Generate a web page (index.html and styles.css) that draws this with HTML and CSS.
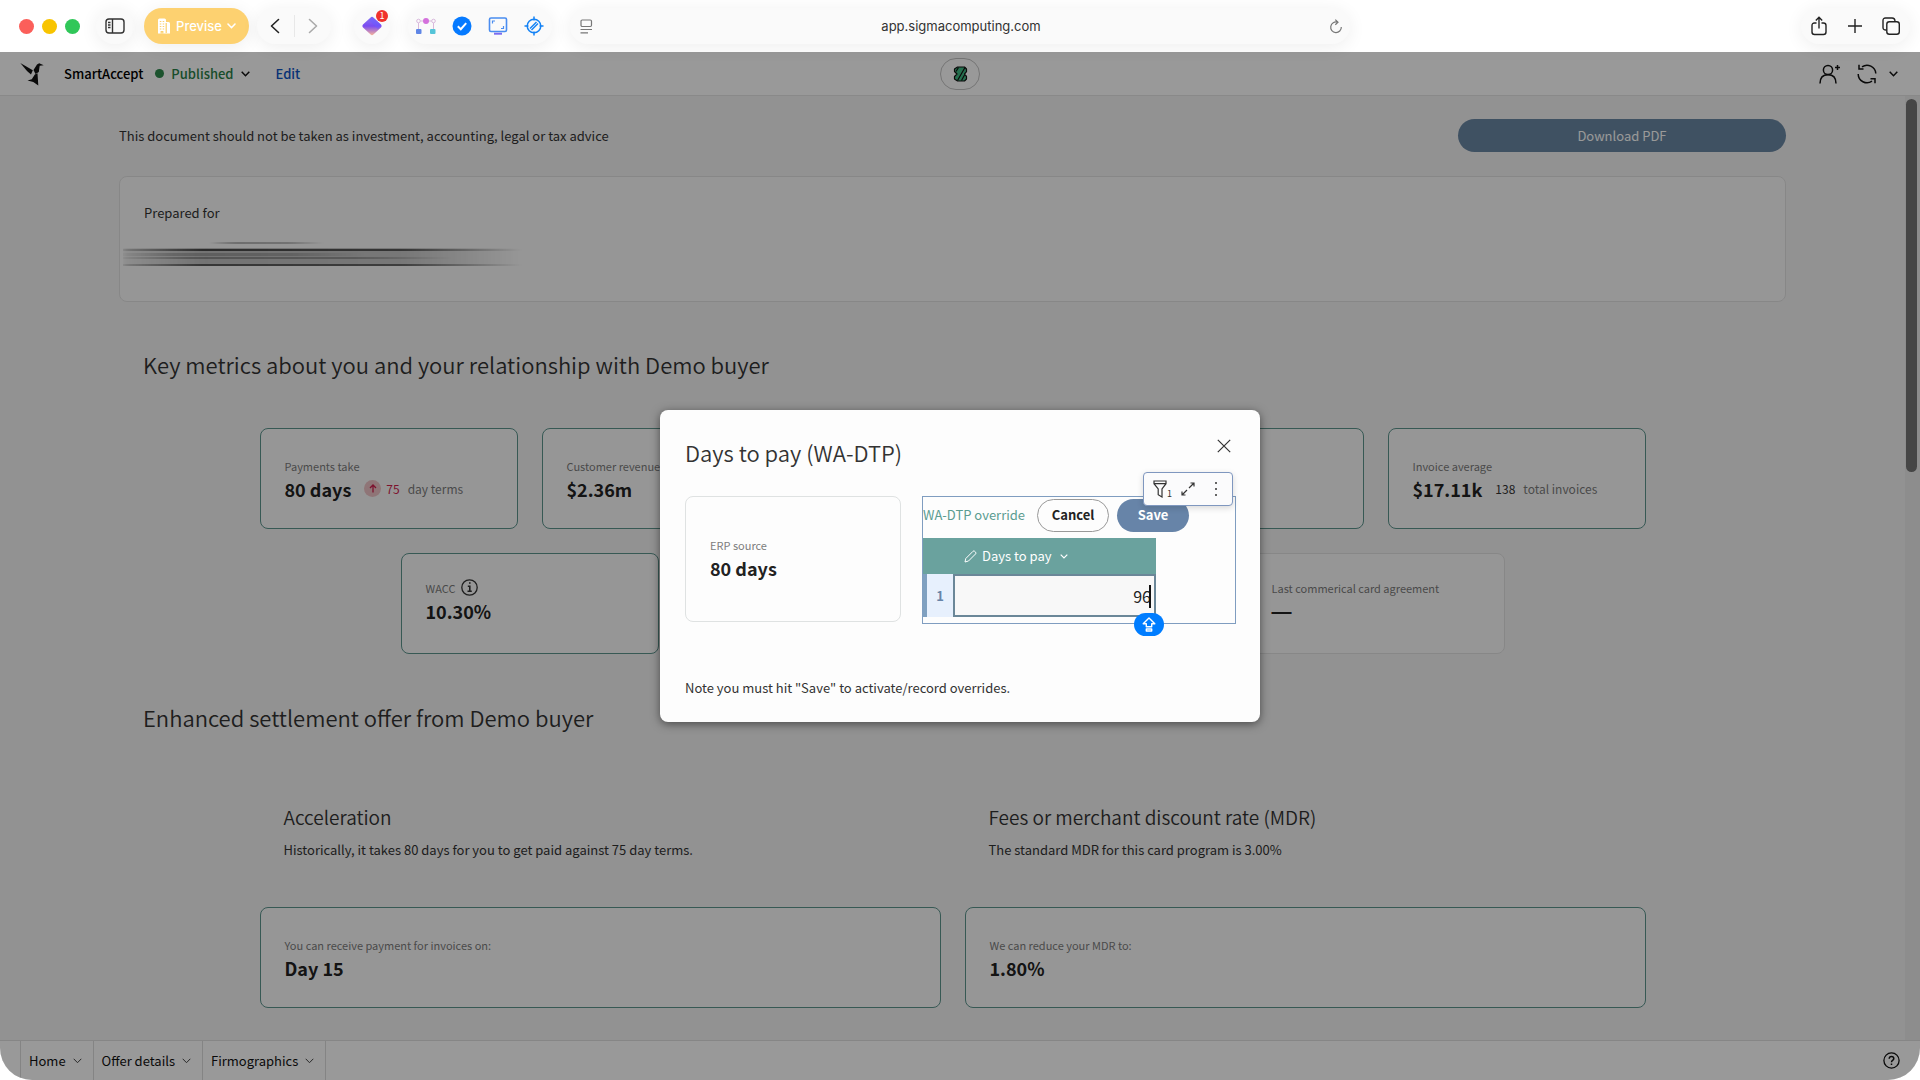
FILE: index.html
```html
<!DOCTYPE html>
<html lang="en">
<head>
<meta charset="utf-8">
<title>SmartAccept</title>
<link rel="stylesheet" href="styles.css">
</head>
<body>

<!-- browser toolbar -->
<header class="browser">
  <div class="lights"><span class="light red"></span><span class="light yellow"></span><span class="light green"></span></div>
  <button class="pill sidebar" aria-label="Sidebar">
    <svg width="20" height="16" viewBox="0 0 20 16" fill="none" stroke="#333" stroke-width="1.4"><rect x="1" y="1" width="18" height="14" rx="3"/><path d="M7.5 1v14M3 4.5h2.5M3 7h2.5M3 9.500h2.500"/></svg>
  </button>
  <button class="pill profile">
    <svg width="14" height="16" viewBox="0 0 14 16"><path fill="#fff" d="M1 2q0-1.500 1.500-1.500h5Q9 .5 9 2v2h2.500Q13 4 13 5.500v10H1z"/><path stroke="#fbd06d" stroke-width="1.200" fill="none" d="M2.800 3.500h1.500M5.700 3.500h1.500M2.800 6h1.500M5.700 6h1.500M2.800 8.500h1.500M5.700 8.500h1.500M2.800 11h1.500M5.700 11h1.500M4.200 15.500v-2h1.600v2M9.200 5v10"/></svg>
    <span>Previse</span>
    <svg width="9" height="6" viewBox="0 0 9 6" fill="none" stroke="#fff" stroke-width="1.600" stroke-linecap="round"><path d="M1 1l3.500 3.700L8 1"/></svg>
  </button>
  <div class="pill nav">
    <button aria-label="Back"><svg width="10" height="16" viewBox="0 0 10 16" fill="none" stroke="#222" stroke-width="1.600" stroke-linecap="round" stroke-linejoin="round"><path d="M8.500 1.500L1.500 8l7 6.500"/></svg></button>
    <button aria-label="Forward"><svg width="10" height="16" viewBox="0 0 10 16" fill="none" stroke="#aaa" stroke-width="1.600" stroke-linecap="round" stroke-linejoin="round"><path d="M1.500 1.500l7 6.500-7 6.500"/></svg></button>
  </div>
  <button class="pill ext" aria-label="Extension">
    <svg width="20" height="20" viewBox="0 0 20 20"><defs><linearGradient id="dia" x1="0" y1="0" x2="0" y2="1"><stop offset="0" stop-color="#8a78f0"/><stop offset=".5" stop-color="#7a4bf2"/><stop offset="1" stop-color="#f6b39a"/></linearGradient></defs><path fill="url(#dia)" d="M8.600 1.500q1.400-1.300 2.800 0l7.600 7q1.200 1.500 0 3l-7.600 7q-1.400 1.300-2.800 0l-7.600-7q-1.200-1.500 0-3z"/><path fill="#6a5bff" opacity=".6" d="M10 .8l9 8.200-3 4L7 4z"/></svg>
    <span class="badge">1</span>
  </button>
  <div class="pill exts">
    <button aria-label="Flow"><svg width="20" height="18" viewBox="0 0 20 18"><g fill="none" stroke="#d9b8dc"><circle cx="2.500" cy="4" r="1.800"/><circle cx="17.500" cy="4" r="1.800"/><path d="M4.500 4h3M12.500 4h3M2.500 6v6M17.500 6v6"/></g><circle cx="10" cy="4" r="3" fill="#d471dc"/><rect x="0" y="12" width="5.500" height="5" rx="1" fill="#5f86e6"/><rect x="14" y="12" width="5.500" height="5" rx="1" fill="#55c4d8"/></svg></button>
    <button aria-label="Tasks"><svg width="20" height="20" viewBox="0 0 20 20"><circle cx="10" cy="10" r="9.500" fill="#067aff"/><path d="M5.800 10.300l3 2.900 5.400-6" fill="none" stroke="#fff" stroke-width="2"/></svg></button>
    <button aria-label="Screen"><svg width="20" height="18" viewBox="0 0 20 18" fill="none" stroke="#4a8df0" stroke-width="1.600"><rect x="1.500" y="1" width="17" height="13.500" rx="1.500"/><path d="M4.500 6.500V4H7M15.500 9v2.500H13" stroke-width="1.200"/><path d="M6 16.700h8" stroke="#7a6cf0" stroke-width="2"/></svg></button>
    <button aria-label="Target"><svg width="20" height="20" viewBox="0 0 20 20" fill="none" stroke="#1583f5" stroke-width="1.500"><circle cx="10" cy="10" r="6.800"/><path d="M10 .5v4M10 15.500v4M.5 10h4M15.500 10h4M6 12.500L12.500 6M7.500 14L14 7.500"/></svg></button>
  </div>
  <div class="pill address">
    <svg width="13" height="15" viewBox="0 0 13 15" fill="none" stroke="#777" stroke-width="1.200"><rect x="1" y="1" width="10.500" height="6.500" rx="1.200"/><path d="M.5 10.500H12M.5 13.800h7.500"/></svg>
    <input type="text" value="app.sigmacomputing.com" aria-label="Address">
    <svg width="14" height="15" viewBox="0 0 14 15" fill="none" stroke="#777" stroke-width="1.200"><path d="M8.500 3.200A5.300 5.300 0 1 0 12.300 8M6.300.6l2.700 2.700-2.700 2.500"/></svg>
  </div>
  <div class="pill actions">
    <button aria-label="Share"><svg width="16" height="20" viewBox="0 0 16 20" fill="none" stroke="#222" stroke-width="1.400"><path d="M5.500 7H3.500Q1 7 1 9.500V16q0 2.500 2.500 2.500h9Q15 18.500 15 16V9.500Q15 7 12.500 7h-2M8 12.500V1.500M4.800 4.500L8 1.300l3.200 3.200"/></svg></button>
    <button aria-label="New tab"><svg width="14" height="14" viewBox="0 0 14 14" stroke="#222" stroke-width="1.400"><path d="M7 0v14M0 7h14"/></svg></button>
    <button aria-label="Tabs"><svg width="18" height="18" viewBox="0 0 18 18" fill="none" stroke="#222" stroke-width="1.400"><rect x="4.800" y="4.800" width="12.500" height="12.500" rx="2.500"/><path d="M4.500 13Q1 13.300 1 10.500V3.500Q1 1 3.500 1H10q3 0 3 3.500"/></svg></button>
  </div>
</header>

<div class="app">
  <nav class="topbar">
    <svg class="logo" width="24" height="24" viewBox="0 0 24 24" fill="#111"><path d="M.3 1L12.800 8.300 11 12.500 7 9z"/><path d="M13.500 8L17 2.500l2.200-1.200 4.500 2-4 .4-.9 6.300-3.300 2z"/><path d="M14.800 12.500l2.700-1.200L18.300 23.500l-5-3.600-5.800-1.400 4.300-1.200z"/></svg>
    <strong class="doc-name">SmartAccept</strong>
    <button class="status"><span class="dot"></span>Published
      <svg width="9" height="6" viewBox="0 0 9 6" fill="none" stroke="#111" stroke-width="1.500"><path d="M.7.800l3.800 3.900L8.300.8"/></svg>
    </button>
    <a class="edit" href="#">Edit</a>
    <button class="org" aria-label="Organization">
      <svg width="15" height="16" viewBox="0 0 15 16" fill="#3fb983" stroke="#111" stroke-width="1.200" stroke-linejoin="round"><path d="M4.500 1h7l2 2v2.700L11.500 8l2 2.300V13l-2 2h-7l-3-2v-2.500L4 8 1.500 5.500V3z"/><path fill="none" d="M4.500 14.500L12 1.500M8.500 14.500l3-5.500M3 5.500L5.500 1.500"/></svg>
    </button>
    <div class="tools">
      <button aria-label="Share"><svg width="22" height="20" viewBox="0 0 22 20" fill="none" stroke="#111" stroke-width="1.500"><circle cx="9" cy="6" r="4.600"/><path d="M1 19.500q0-8.700 8-8.700t8 8.700M18.500 1v5M16 3.500h5"/></svg></button>
      <button aria-label="Refresh"><svg width="20" height="20" viewBox="0 0 20 20" fill="none" stroke="#111" stroke-width="1.500"><path d="M5 2.800A8.800 8.800 0 0 1 18.800 9.500M15 17.200A8.800 8.800 0 0 1 1.200 10M2 .8v4.200h4.500M18 19.200v-4.500h-4.500"/></svg></button>
      <button aria-label="More"><svg width="9" height="6" viewBox="0 0 9 6" fill="none" stroke="#111" stroke-width="1.500"><path d="M.7.800l3.800 3.900L8.300.8"/></svg></button>
    </div>
  </nav>

  <div class="scroll">
    <main class="page">
      <div class="intro">
        <p>This document should not be taken as investment, accounting, legal or tax advice</p>
        <button class="download">Download PDF</button>
      </div>

      <section class="prepared">
        <p>Prepared for</p>
        <svg class="smear" width="400" height="28" viewBox="0 0 400 28">
          <defs>
            <linearGradient id="fade"><stop offset="0" stop-color="#000" stop-opacity=".2"/><stop offset=".2" stop-color="#000" stop-opacity=".9"/><stop offset=".7" stop-color="#000" stop-opacity=".8"/><stop offset="1" stop-color="#000" stop-opacity="0"/></linearGradient>
            <filter id="soft"><feGaussianBlur stdDeviation="3 .6"/></filter>
          </defs>
          <g fill="url(#fade)" filter="url(#soft)">
            <rect x="90" y="1" width="110" height="2" opacity=".3"/>
            <rect y="7" width="398" height="18" opacity=".26"/>
            <rect y="8" width="398" height="2" opacity=".7"/>
            <rect y="12" width="240" height="3" opacity=".2"/>
            <rect y="16" width="330" height="2" opacity=".3"/>
            <rect y="23" width="398" height="2" opacity=".6"/>
          </g>
        </svg>
      </section>

      <h2>Key metrics about you and your relationship with Demo buyer</h2>
      <div class="metrics">
        <div class="card">
          <span class="label">Payments take</span>
          <div class="figure"><b>80 days</b><span class="compare up"><i class="arrow"><svg width="8" height="9" viewBox="0 0 8 9" fill="none" stroke="#d01f4e" stroke-width="1.300"><path d="M4 8.500V1.200M1 4l3-3 3 3"/></svg></i>75</span><span class="unit">day terms</span></div>
        </div>
        <div class="card"><span class="label">Customer revenue</span><div class="figure"><b>$2.36m</b></div></div>
        <div class="card"></div>
        <div class="card"></div>
        <div class="card">
          <span class="label">Invoice average</span>
          <div class="figure"><b>$17.11k</b><span class="compare">138</span><span class="unit">total invoices</span></div>
        </div>
      </div>
      <div class="metrics second">
        <div class="card">
          <span class="label">WACC <svg width="17" height="17" viewBox="0 0 17 17" fill="none" stroke="#333" stroke-width="1.300"><circle cx="8.500" cy="8.500" r="7.700"/><path stroke-width="1.600" d="M6.800 7.300h2v5M6.500 12.300h4.300M8 4h1.600"/></svg></span>
          <div class="figure"><b>10.30%</b></div>
        </div>
        <div class="card"></div>
        <div class="card"></div>
        <div class="card plain"><span class="label">Last commerical card agreement</span><div class="figure"><b class="none">—</b></div></div>
      </div>

      <h2>Enhanced settlement offer from Demo buyer</h2>
      <div class="offers">
        <section>
          <h3>Acceleration</h3>
          <p>Historically, it takes 80 days for you to get paid against 75 day terms.</p>
          <div class="card"><span class="label">You can receive payment for invoices on:</span><div class="figure"><b>Day 15</b></div></div>
        </section>
        <section>
          <h3>Fees or merchant discount rate (MDR)</h3>
          <p>The standard MDR for this card program is 3.00%</p>
          <div class="card"><span class="label">We can reduce your MDR to:</span><div class="figure"><b>1.80%</b></div></div>
        </section>
      </div>
    </main>
    <div class="track"><div class="thumb"></div></div>
  </div>

  <footer class="tabs">
    <button class="tab">Home <svg width="9" height="6" viewBox="0 0 9 6" fill="none" stroke="#444"><path d="M.7.800l3.800 3.900L8.300.8"/></svg></button>
    <button class="tab">Offer details <svg width="9" height="6" viewBox="0 0 9 6" fill="none" stroke="#444"><path d="M.7.800l3.800 3.900L8.300.8"/></svg></button>
    <button class="tab">Firmographics <svg width="9" height="6" viewBox="0 0 9 6" fill="none" stroke="#444"><path d="M.7.800l3.800 3.900L8.300.8"/></svg></button>
    <button class="help" aria-label="Help"><svg width="17" height="17" viewBox="0 0 17 17" fill="none" stroke="#111" stroke-width="1.300"><circle cx="8.500" cy="8.500" r="7.600"/><path stroke-width="1.500" d="M6.200 6.800q.1-2.200 2.300-2.200t2.300 2q0 1.100-1.200 1.800-1.100.7-1.100 1.800M8.500 11.500v1.500"/></svg></button>
  </footer>

  <div class="overlay">
    <div class="modal" role="dialog" aria-labelledby="modal-title">
      <div class="modal-head">
        <h2 id="modal-title">Days to pay (WA-DTP)</h2>
        <button class="close" aria-label="Close"><svg width="14" height="14" viewBox="0 0 14 14" stroke="#333" stroke-width="1.200"><path d="M.8.800l12.400 12.400M13.200.8L.8 13.200"/></svg></button>
      </div>
      <div class="modal-body">
        <div class="card source"><span class="label">ERP source</span><div class="figure"><b>80 days</b></div></div>
        <div class="override">
          <div class="override-head">
            <label for="dtp">WA-DTP override</label>
            <button class="cancel">Cancel</button>
            <button class="save">Save</button>
          </div>
          <table>
            <thead>
              <tr><th colspan="2"><div class="col"><svg width="13" height="13" viewBox="0 0 13 13" fill="none" stroke="#fff"><path d="M1 12l.8-3.500L9 1.300q.8-.8 1.700 0l.9.900q.8.900 0 1.700L4.500 11z"/></svg>Days to pay<svg class="caret-down" width="8" height="5" viewBox="0 0 8 5" fill="none" stroke="#fff" stroke-width="1.200"><path d="M.7.700L4 4 7.300.7"/></svg></div></th></tr>
            </thead>
            <tbody>
              <tr><td class="num">1</td><td class="cell"><input id="dtp" type="text" value="96"><span class="caret"></span></td></tr>
            </tbody>
          </table>
          <div class="mini-tools">
            <button aria-label="Filter"><svg width="14" height="18" viewBox="0 0 14 18" fill="none" stroke="#333" stroke-width="1.200"><path d="M1 1h12v2.700L9 9v8l-3.800-2.300V9L1 3.700zM1 3.700h12"/></svg><sub>1</sub></button>
            <button aria-label="Expand"><svg width="14" height="14" viewBox="0 0 14 14" fill="none" stroke="#333" stroke-width="1.200"><path d="M8 6l5-5M9.500 1H13v3.500M6 8l-5 5M4.500 13H1V9.500"/></svg></button>
            <button class="dots" aria-label="More"><svg width="4" height="16" viewBox="0 0 4 16" fill="#333"><circle cx="2" cy="2" r="1"/><circle cx="2" cy="8" r="1"/><circle cx="2" cy="14" r="1"/></svg></button>
          </div>
          <span class="caps"><svg width="14" height="15" viewBox="0 0 14 15" fill="none" stroke="#fff" stroke-width="1.400" stroke-linejoin="round"><path d="M7 1l5.800 5.700H9.700v3.100H4.300V6.700H1.200zM4.300 12h5.400v2H4.300z"/></svg></span>
        </div>
      </div>
      <p class="note">Note you must hit "Save" to activate/record overrides.</p>
    </div>
  </div>
</div>

</body>
</html>
```

FILE: styles.css
```css
* { box-sizing: border-box; }

body {
  margin: 0;
  height: 100vh;
  display: flex;
  flex-direction: column;
  background: #fff;
  color: #333;
  font-family: "Noto Sans CJK SC", "Liberation Sans", sans-serif;
  font-size: 13px;
  line-height: 20px;
  overflow: hidden;
}

p, h2, h3 { margin: 0; }
h2 { font-size: 22px; line-height: 32px; font-weight: 350; }
h3 { font-size: 19px; line-height: 28px; font-weight: 350; }

button {
  display: flex;
  align-items: center;
  justify-content: center;
  padding: 0;
  border: 0;
  background: none;
  color: inherit;
  font: inherit;
}
svg { display: block; flex: none; }

/* browser toolbar */
.browser {
  position: relative;
  z-index: 2;
  flex: none;
  height: 52px;
  padding: 0 10px 0 19px;
  display: flex;
  align-items: center;
}
.lights { display: flex; gap: 8px; }
.light { width: 15px; height: 15px; border-radius: 50%; }
.red { background: #fb5f5a; }
.yellow { background: #f8c400; }
.green { background: #30c759; }
.pill {
  height: 36px;
  border-radius: 18px;
  background: #fafafa;
  box-shadow: 0 3px 18px rgba(0, 0, 0, .07);
  display: flex;
  align-items: center;
}
.sidebar { width: 38px; margin-left: 16px; }
.profile { width: 105px; margin-left: 10px; gap: 5px; background: #fdd170; color: #fff; font-family: Inter, sans-serif; font-size: 13px; font-weight: 500; }
.nav { width: 74px; margin-left: 8px; }
.nav button { flex: 1; height: 22px; }
.nav button + button { border-left: 1px solid #e8e8e8; }
.ext { position: relative; width: 36px; margin-left: 23px; }
.badge {
  position: absolute;
  top: 2px;
  right: 2px;
  width: 12px;
  height: 12px;
  border-radius: 6px;
  background: #f0322c;
  color: #fff;
  font-size: 9px;
  line-height: 12px;
}
.exts { width: 144px; margin-left: 18px; justify-content: space-between; padding: 0 8px; }
.address { flex: 1; max-width: 780px; margin-left: 18px; padding: 0 7px 0 10px; }
.address input {
  flex: 1;
  min-width: 0;
  border: 0;
  background: none;
  color: #333;
  text-align: center;
  font-family: Inter, sans-serif;
  font-size: 13px;
}
.actions { width: 109px; margin-left: auto; padding: 0 10px; justify-content: space-between; }

/* app shell */
.app {
  position: relative;
  flex: 1;
  min-height: 0;
  display: flex;
  flex-direction: column;
  border-radius: 0 0 32px 32px;
  overflow: hidden;
  background: #f3f3f3;
}
.topbar {
  position: relative;
  flex: none;
  height: 44px;
  padding: 0 22px 0 20px;
  display: flex;
  align-items: center;
  background: #fff;
  border-bottom: 1px solid #e4e4e4;
  color: #000;
  font-weight: 500;
}
.doc-name { margin-left: 20px; font-weight: 500; }
.status { margin-left: 12px; gap: 7px; color: #2a7f47; }
.dot { width: 9px; height: 9px; border-radius: 50%; background: #2f8a4e; }
.edit { margin-left: 26px; color: #0d54c4; text-decoration: none; }
.org {
  position: absolute;
  left: 50%;
  margin-left: -20px;
  width: 40px;
  height: 32px;
  border: 1px solid #c4c4c4;
  border-radius: 16px;
}
.tools { margin-left: auto; display: flex; align-items: center; gap: 12px; }
.tools button:first-child { margin-right: 4px; }

.scroll { flex: 1; min-height: 0; display: flex; overflow: hidden; }
.page { flex: 1; padding: 23px 119px 0; }
.track { width: 15px; padding: 3px 3px 0 1px; background: #ebebeb; }
.thumb { height: 373px; border-radius: 6px; background: #757575; }

.intro { display: flex; align-items: center; justify-content: space-between; }
.download { width: 328px; height: 33px; border-radius: 17px; background: #6a87a3; color: #fff; }
.prepared {
  height: 126px;
  margin-top: 24px;
  padding: 26px 24px;
  background: #fbfbfb;
  border: 1px solid #e2e2e2;
  border-radius: 8px;
}
.smear { margin: 18px 0 0 -21px; }

.page > h2 { padding-left: 24px; margin-top: 46px; }
.metrics { display: flex; justify-content: center; gap: 24px; margin-top: 48px; }
.metrics .card { width: 258px; flex: none; }
.second { margin-top: 24px; }
.second .card { padding-bottom: 6px; }
.card {
  height: 101px;
  padding: 0 24px;
  display: flex;
  flex-direction: column;
  justify-content: center;
  background: #fbfbfb;
  border: 1px solid #5c948d;
  border-radius: 8px;
}
.metrics .plain { border-color: #e2e2e2; }
.label { display: flex; align-items: center; gap: 6px; height: 20px; font-size: 11px; color: #7c7c7c; }
.figure { display: flex; align-items: center; height: 26px; font-size: 12px; }
.figure b { font-size: 18px; line-height: 26px; color: #222; }
.figure .none { font-family: "Liberation Sans", sans-serif; font-size: 20px; }
.compare { display: flex; align-items: center; gap: 5px; margin-left: 13px; color: #333; }
.up { color: #d01f4e; }
.arrow { width: 17px; height: 17px; border-radius: 50%; background: #eec4c6; display: flex; align-items: center; justify-content: center; }
.unit { margin-left: 8px; color: #7c7c7c; }

.page > .second + h2 { margin-top: 47px; }
.offers { display: flex; justify-content: center; gap: 24px; margin-top: 70px; }
.offers section { width: 681px; }
.offers h3, .offers p { padding-left: 24px; }
.offers p { margin-top: 9px; }
.offers .card { margin-top: 47px; }

.tabs { flex: none; height: 40px; padding: 0 20px; display: flex; background: #fff; border-top: 1px solid #e0e0e0; color: #111; }
.tab { gap: 7px; padding: 0 11px 0 8px; border-right: 1px solid #ddd; }
.tab:first-child { border-left: 1px solid #ddd; }
.help { margin-left: auto; }

/* dialog over the page */
.overlay {
  position: absolute;
  inset: 0;
  z-index: 1;
  display: flex;
  align-items: center;
  justify-content: center;
  background: rgba(0, 0, 0, .4);
}
.modal {
  width: 600px;
  padding: 24px 24px 24px 25px;
  border-radius: 8px;
  background: #fdfdfd;
  box-shadow: 0 2px 10px rgba(0, 0, 0, .5);
}
.modal-head { display: flex; justify-content: space-between; height: 62px; }
.modal-head h2 { line-height: 36px; }
.close { width: 24px; height: 24px; }
.modal-body { display: flex; align-items: flex-start; gap: 21px; }
.modal .source { width: 216px; height: 126px; padding-bottom: 3px; background: none; border-color: #dfe2e2; }
.override { position: relative; flex: 1; height: 128px; border: 1px solid #7f9dc0; }
.override-head { display: flex; align-items: center; gap: 8px; height: 36px; }
.override-head label { width: 106px; color: #5b9c91; white-space: nowrap; }
.override-head button { width: 72px; height: 33px; border-radius: 17px; font-weight: 700; }
.cancel { border: 1px solid #999; color: #222; }
.save { background: #6784a8; color: #fff; }

table { width: 233px; margin-top: 5px; border-collapse: separate; border-spacing: 0; }
th { height: 36px; padding: 0 0 0 41px; background: #6aa29e; color: #fff; font-weight: 400; }
.col { display: flex; align-items: center; gap: 5px; }
.caret-down { margin-left: 4px; }
td { height: 43px; padding: 0; }
.num { width: 30px; border-left: 4px solid #7fa0c0; background: #e7f0fd; color: #6784a8; font-weight: 700; text-align: center; }
.cell { position: relative; border: 2px solid #6b8798; background: #f8f8f8; }
.cell input {
  display: block;
  width: 100%;
  height: 39px;
  padding: 0 3px;
  border: 0;
  background: none;
  color: #222;
  font: inherit;
  font-size: 16px;
  text-align: right;
  outline: 0;
}
.caret { position: absolute; top: 9px; right: 3px; width: 2px; height: 23px; background: #111; }

.mini-tools {
  position: absolute;
  top: -25px;
  right: 2px;
  width: 90px;
  height: 34px;
  padding: 0 14px 0 9px;
  display: flex;
  align-items: center;
  gap: 9px;
  background: #fbfbfc;
  border: 1px solid #7f97bf;
  border-radius: 4px;
  box-shadow: 0 2px 6px rgba(0, 0, 0, .15);
}
.mini-tools .dots { margin-left: auto; }
.mini-tools sub { align-self: flex-end; font-size: 9px; line-height: 9px; }
.caps {
  position: absolute;
  left: 211px;
  bottom: -13px;
  width: 30px;
  height: 23px;
  border-radius: 12px;
  background: #007dff;
  display: flex;
  align-items: center;
  justify-content: center;
}
.note { margin-top: 54px; }
```
